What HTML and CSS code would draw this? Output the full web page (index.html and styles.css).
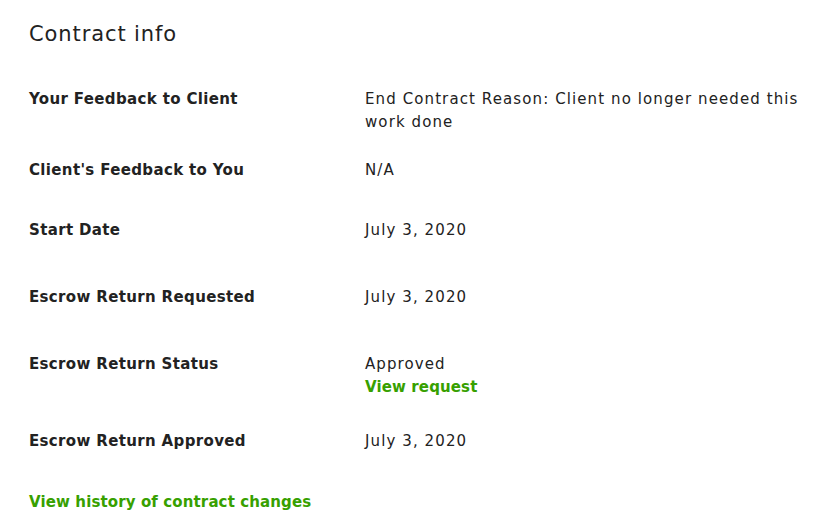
FILE: index.html
```html
<!DOCTYPE html>
<html lang="en">
<head>
    <meta charset="UTF-8">
    <title>Contract info</title>
    <link rel="stylesheet" href="styles.css">
</head>
<body>
    <div class="contract-info">
        <h2>Contract info</h2>

        <div class="info-row row-feedback">
            <div class="label">Your Feedback to Client</div>
            <div class="value">End Contract Reason: Client no longer needed this work done</div>
        </div>

        <div class="info-row row-client">
            <div class="label">Client's Feedback to You</div>
            <div class="value">N/A</div>
        </div>

        <div class="info-row row-start">
            <div class="label">Start Date</div>
            <div class="value">July 3, 2020</div>
        </div>

        <div class="info-row row-requested">
            <div class="label">Escrow Return Requested</div>
            <div class="value">July 3, 2020</div>
        </div>

        <div class="info-row row-status">
            <div class="label">Escrow Return Status</div>
            <div class="value">
                Approved<br>
                <a href="#" class="link">View request</a>
            </div>
        </div>

        <div class="info-row row-approved">
            <div class="label">Escrow Return Approved</div>
            <div class="value">July 3, 2020</div>
        </div>

        <a href="#" class="link history-link">View history of contract changes</a>
    </div>
</body>
</html>
```

FILE: styles.css
```css
body {
    margin: 0;
    background: #fff;
    font-family: "DejaVu Sans", Arial, sans-serif;
    color: #222;
}

.contract-info {
    padding: 19px 29px 0 29px;
    font-size: 15px;
    line-height: 23px;
}

h2 {
    margin: 0;
    font-size: 21px;
    font-weight: normal;
    line-height: 30px;
    letter-spacing: 0.9px;
    color: #222;
}

.info-row {
    display: grid;
    grid-template-columns: 336px 1fr;
}

.label {
    font-weight: bold;
    letter-spacing: 0.35px;
}

.value {
    max-width: 448px;
    letter-spacing: 1.1px;
}

.row-feedback { margin-top: 39px; }
.row-client { margin-top: 25px; }
.row-start { margin-top: 37px; }
.row-requested { margin-top: 44px; }
.row-status { margin-top: 44px; }
.row-approved { margin-top: 31px; }

.link {
    color: #37a000;
    font-weight: bold;
    letter-spacing: 0.12px;
    text-decoration: none;
}

.history-link {
    display: block;
    margin-top: 38px;
}
```
